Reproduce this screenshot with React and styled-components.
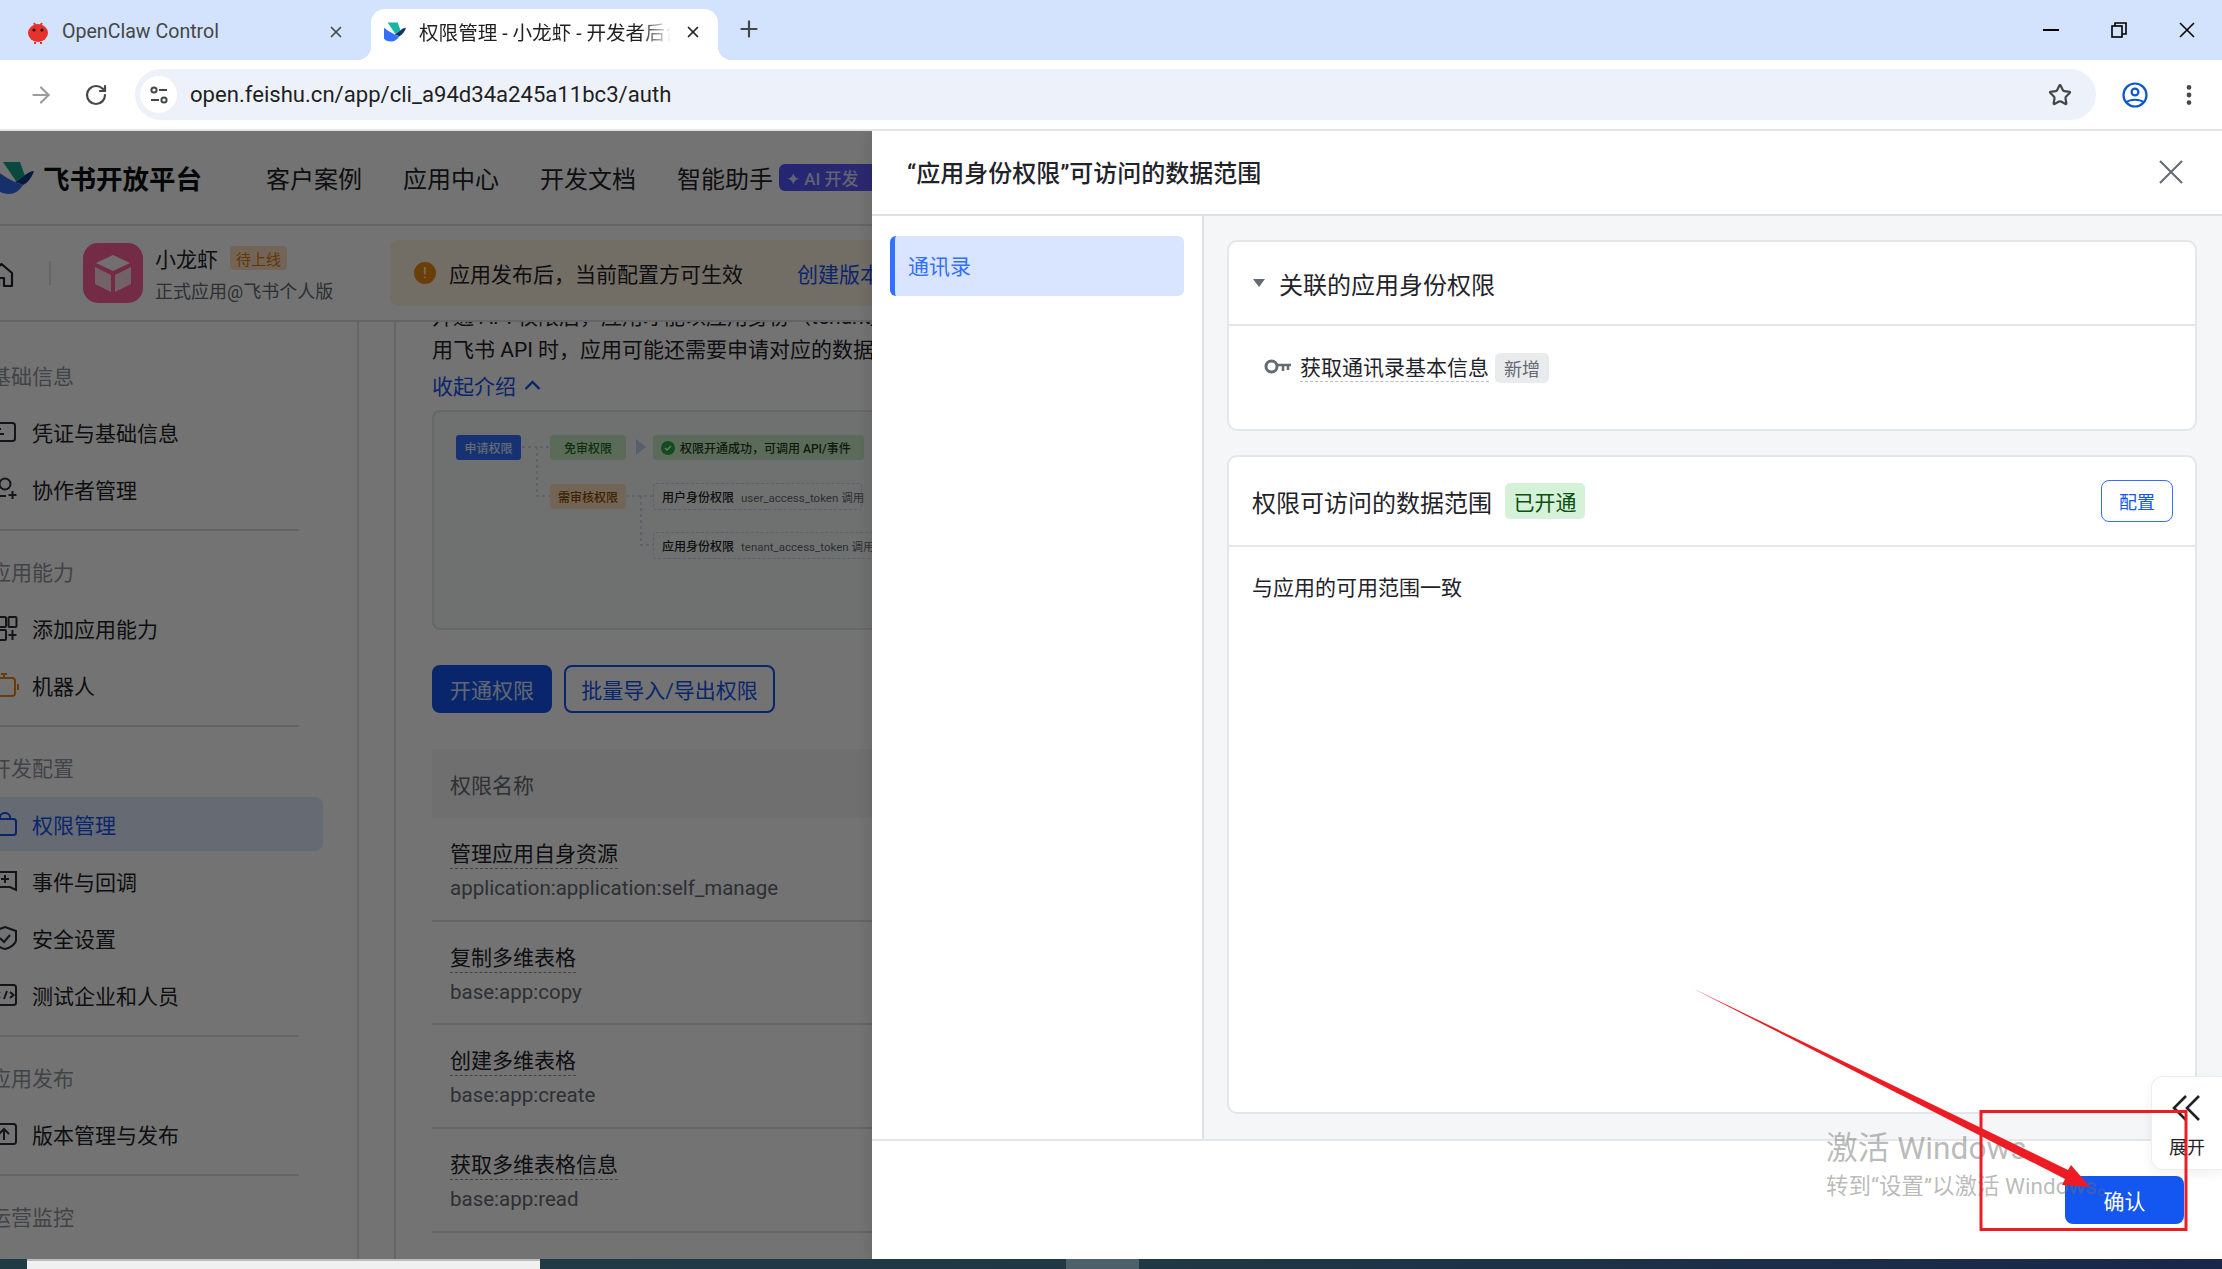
import React from 'react';
import styled, { createGlobalStyle } from 'styled-components';
import { ArrowRight, RotateCw, Plus, X, Star, EllipsisVertical } from 'lucide-react';

const GlobalStyle = createGlobalStyle`
  html, body {
    margin: 0;
    padding: 0;
    background: #fff;
  }
  body {
    font-family: Roboto, "Noto Sans CJK SC", sans-serif;
    color: #1f2329;
  }
  * {
    box-sizing: border-box;
  }
`;

const Page = styled.div`
  position: relative;
  width: 2222px;
  height: 1269px;
  display: flex;
  flex-direction: column;
  overflow: hidden;
`;

/* browser chrome */
const TabStrip = styled.div`
  height: 60px;
  flex: none;
  display: flex;
  align-items: flex-end;
  background: #d3e3fd;
`;

const Tab = styled.div`
  position: relative;
  height: 51px;
  display: flex;
  align-items: center;
  gap: 13px;
  padding-bottom: 6px;
  width: ${(p) => (p.$active ? '347px' : '371px')};
  padding-left: ${(p) => (p.$active ? '13px' : '27px')};
  padding-right: ${(p) => (p.$active ? '16px' : '26px')};
  background: ${(p) => (p.$active ? '#fff' : 'transparent')};
  border-radius: 14px 14px 0 0;

  ${(p) =>
    p.$active &&
    `
    &::before, &::after {
      content: '';
      position: absolute;
      bottom: 0;
      width: 14px;
      height: 14px;
    }
    &::before {
      left: -14px;
      background: radial-gradient(circle at 0 0, transparent 14px, #fff 14.5px);
    }
    &::after {
      right: -14px;
      background: radial-gradient(circle at 100% 0, transparent 14px, #fff 14.5px);
    }
  `}
`;

const TabTitle = styled.span`
  flex: 1;
  min-width: 0;
  overflow: hidden;
  white-space: nowrap;
  font-size: 19.6px;
  color: ${(p) => (p.$active ? '#1f1f1f' : '#444746')};
  ${(p) =>
    p.$active &&
    `
    -webkit-mask-image: linear-gradient(90deg, #000 88%, transparent 100%);
    mask-image: linear-gradient(90deg, #000 88%, transparent 100%);
  `}
`;

const NewTab = styled.div`
  display: flex;
  margin: 0 0 18px 18px;
  color: #444746;
`;

const WindowButtons = styled.div`
  margin-left: auto;
  align-self: flex-start;
  display: flex;
  padding: 18px 1px 0 0;
`;

const WindowButton = styled.div`
  width: 68px;
  height: 24px;
  display: flex;
  align-items: center;
  justify-content: center;
`;

const Toolbar = styled.div`
  height: 71px;
  flex: none;
  display: flex;
  align-items: center;
  background: #fff;
  border-bottom: 2px solid #e3e3e3;
  border-top-right-radius: 8px;
  padding-left: 28px;
  gap: 30px;
`;

const Omnibox = styled.div`
  width: 1961px;
  height: 51px;
  margin-left: -3px;
  display: flex;
  align-items: center;
  padding: 0 24px 0 5px;
  background: #edf2fa;
  border-radius: 26px;
`;

const SiteChip = styled.div`
  width: 37px;
  height: 37px;
  flex: none;
  display: flex;
  align-items: center;
  justify-content: center;
  border-radius: 50%;
  background: #fff;
`;

const Url = styled.span`
  flex: 1;
  margin-left: 13px;
  padding-bottom: 2px;
  font-size: 22.1px;
  color: #1f1f1f;
`;

const ToolIcons = styled.div`
  display: flex;
  align-items: center;
  margin-left: -4px;
  gap: 28px;
`;

/* the page under the drawer */
const Viewport = styled.div`
  position: relative;
  flex: 1;
  min-height: 0;
  overflow: hidden;
`;

const Under = styled.div`
  height: 100%;
  display: flex;
  flex-direction: column;
  background: #fff;
`;

const Nav = styled.div`
  height: 95px;
  flex: none;
  display: flex;
  align-items: center;
  border-bottom: 2px solid #dee0e3;
`;

const Logo = styled.div`
  display: flex;
  align-items: center;
  gap: 9px;
  margin-left: -3px;
  font-size: 26.5px;
  font-weight: 700;
  color: #0b0d10;
`;

const NavLinks = styled.div`
  display: flex;
  margin-left: 64px;
  gap: 41px;
  font-size: 24px;
  white-space: nowrap;
`;

const AiBadge = styled.span`
  display: inline-flex;
  align-items: center;
  gap: 3px;
  margin-left: 6px;
  height: 27px;
  width: 120px;
  padding-left: 7px;
  border-radius: 6px;
  background: linear-gradient(90deg, #4f55ff, #6a5cf5);
  font-size: 17px;
  color: #d8dcff;
  font-weight: 500;
  align-self: center;
`;

const AppBar = styled.div`
  height: 96px;
  flex: none;
  display: flex;
  align-items: center;
  border-bottom: 2px solid #dee0e3;
`;

const HomeIcon = styled.div`
  display: flex;
  margin-left: -11px;
  margin-top: 4px;
`;

const VRule = styled.div`
  width: 2px;
  height: 24px;
  margin: 0 32px 0 35px;
  background: #dee0e3;
`;

const AppIcon = styled.div`
  width: 60px;
  height: 60px;
  flex: none;
  display: flex;
  align-items: center;
  justify-content: center;
  border-radius: 15px;
  background: #ff5f9b;
`;

const AppMeta = styled.div`
  width: 235px;
  margin-left: 12px;
  display: flex;
  flex-direction: column;
  gap: 4px;
`;

const AppName = styled.div`
  display: flex;
  align-items: center;
  gap: 12px;
  font-size: 21px;
`;

const PendingTag = styled.span`
  display: inline-flex;
  align-items: center;
  justify-content: center;
  height: 24px;
  width: 57px;
  border-radius: 4px;
  background: #fcdfc4;
  color: #de7802;
  font-size: 15px;
`;

const AppSub = styled.div`
  font-size: 18px;
  color: #646a73;
  white-space: nowrap;
`;

const Banner = styled.div`
  width: 560px;
  height: 66px;
  flex: none;
  display: flex;
  align-items: center;
  gap: 13px;
  padding-left: 24px;
  border-radius: 8px;
  background: #fdf1e0;
  font-size: 21px;
  white-space: nowrap;
`;

const BannerIcon = styled.span`
  width: 22px;
  height: 22px;
  flex: none;
  display: flex;
  align-items: center;
  justify-content: center;
  border-radius: 50%;
  background: #ed8b12;
  color: #fff;
  font-size: 15px;
`;

const BannerLink = styled.span`
  margin-left: 41px;
  color: #1456f0;
`;

const Body = styled.div`
  flex: 1;
  min-height: 0;
  display: flex;
`;

const Sidebar = styled.div`
  width: 359px;
  flex: none;
  display: flex;
  flex-direction: column;
  gap: 3px;
  padding: 26px 36px 0 0;
  border-right: 2px solid #dee0e3;
  overflow: hidden;
`;

const SideLabel = styled.div`
  height: 54px;
  flex: none;
  display: flex;
  align-items: center;
  margin-left: -10px;
  font-size: 21px;
  color: #8f959e;
  white-space: nowrap;
`;

const SideItem = styled.div`
  height: 54px;
  flex: none;
  display: flex;
  align-items: center;
  gap: 16px;
  width: 323px;
  border-radius: 0 8px 8px 0;
  font-size: 21px;
  white-space: nowrap;
  background: ${(p) => (p.$active ? '#e1eaff' : 'transparent')};
  color: ${(p) => (p.$active ? '#1456f0' : '#1f2329')};

  svg {
    flex: none;
    margin-left: -8px;
    overflow: visible;
  }
`;

const SideRule = styled.div`
  height: 2px;
  flex: none;
  width: 299px;
  margin: 10px 0;
  background: #dee0e3;
`;

const Gutter = styled.div`
  width: 37px;
  flex: none;
  border-right: 2px solid #dee0e3;
`;

const Main = styled.div`
  flex: 1;
  min-width: 0;
  padding-left: 36px;
  overflow: hidden;
`;

const Intro = styled.p`
  margin: -21px 0 0;
  font-size: 21px;
  line-height: 33px;
  color: #1f2329;
  white-space: nowrap;
`;

const Collapse = styled.div`
  height: 37px;
  display: flex;
  align-items: center;
  gap: 8px;
  margin-top: -1px;
  font-size: 21px;
  color: #1456f0;
`;

const Diagram = styled.div`
  position: relative;
  width: 800px;
  height: 220px;
  margin-top: 7px;
  border: 2px solid #e0e4e6;
  border-radius: 8px;
  background: #f6fbfb;
`;

const DiagramLines = styled.svg`
  position: absolute;
  left: 0;
  top: 0;
`;

const Node = styled.div`
  position: absolute;
  left: ${(p) => p.$x}px;
  top: ${(p) => p.$y}px;
  width: ${(p) => p.$w}px;
  height: ${(p) => p.$h || 25}px;
  display: flex;
  align-items: center;
  justify-content: ${(p) => (p.$start ? 'flex-start' : 'center')};
  gap: 5px;
  padding-left: ${(p) => (p.$start ? '8px' : '0')};
  border-radius: 3px;
  font-size: 12px;
  font-weight: 500;
  white-space: nowrap;
  color: ${(p) => p.$color};
  background: ${(p) => p.$bg || 'transparent'};
  border: ${(p) => (p.$dashed ? '1.5px dashed #c7d5f2' : 'none')};
`;

const NodeMuted = styled.span`
  margin-left: 2px;
  font-weight: 400;
  font-size: 11.5px;
  color: #646a73;
`;

const Actions = styled.div`
  display: flex;
  gap: 12px;
  margin-top: 35px;
`;

const Button = styled.div`
  height: 48px;
  display: flex;
  align-items: center;
  justify-content: center;
  width: ${(p) => p.$w}px;
  border-radius: 8px;
  font-size: 21px;
  white-space: nowrap;
  background: ${(p) => (p.$solid ? '#1456f0' : '#fff')};
  color: ${(p) => (p.$solid ? '#d8e2ff' : '#1456f0')};
  border: ${(p) => (p.$solid ? 'none' : '2px solid #1456f0')};
`;

const TableHead = styled.div`
  height: 69px;
  margin-top: 36px;
  display: flex;
  align-items: center;
  padding-left: 18px;
  background: #f5f6f7;
  font-size: 21px;
  color: #646a73;
`;

const Row = styled.div`
  height: 103.7px;
  padding: 23px 0 0 18px;
  border-bottom: 2px solid #dee0e3;
`;

const RowName = styled.div`
  display: inline-block;
  font-size: 21px;
  line-height: 27px;
  padding-bottom: 0;
  border-bottom: 1.5px dashed #8f959e;
`;

const RowCode = styled.div`
  margin-top: 5px;
  font-size: 20.5px;
  line-height: 28px;
  color: #646a73;
`;

const Dim = styled.div`
  position: absolute;
  inset: 0;
  background: rgba(0, 0, 0, 0.55);
`;

/* drawer */
const Drawer = styled.div`
  position: absolute;
  top: 0;
  bottom: 0;
  left: 872px;
  right: 0;
  display: flex;
  flex-direction: column;
  background: #fff;
  box-shadow: -4px 0 12px rgba(0, 0, 0, 0.08);
`;

const DrawerHead = styled.div`
  height: 85px;
  flex: none;
  display: flex;
  align-items: center;
  justify-content: space-between;
  padding: 0 39px 2px 35px;
  border-bottom: 2px solid #dee0e3;
  font-size: 24px;
  font-weight: 500;
`;

const DrawerBody = styled.div`
  flex: 1;
  min-height: 0;
  display: flex;
`;

const DrawerSide = styled.div`
  width: 332px;
  flex: none;
  padding: 20px 18px 0 18px;
  border-right: 2px solid #dee0e3;
`;

const DrawerTab = styled.div`
  height: 60px;
  display: flex;
  align-items: center;
  padding: 0 0 2px 13px;
  border-left: 5px solid #3370ff;
  border-radius: 6px;
  background: #d9e5fe;
  color: #3370ff;
  font-size: 21px;
`;

const DrawerContent = styled.div`
  flex: 1;
  min-width: 0;
  display: flex;
  flex-direction: column;
  gap: 24px;
  padding: 24px 25px 25px 23px;
  background: #f5f6f7;
`;

const Card = styled.div`
  display: flex;
  flex-direction: column;
  ${(p) => (p.$grow ? 'flex: 1; min-height: 0;' : 'height: 191px; flex: none;')}
  border: 2px solid #e4e6e9;
  border-radius: 10px;
  background: #fff;
`;

const CardHead = styled.div`
  flex: none;
  display: flex;
  align-items: center;
  height: ${(p) => p.$h}px;
  padding: 0 22px 0 ${(p) => p.$pad}px;
  border-bottom: 2px solid #e4e6e9;
  font-size: 24px;
  white-space: nowrap;
`;

const Caret = styled.span`
  width: 0;
  height: 0;
  margin-right: 14px;
  border-left: 6px solid transparent;
  border-right: 6px solid transparent;
  border-top: 8px solid #646a73;
`;

const KeyRow = styled.div`
  display: flex;
  align-items: center;
  padding: 27px 0 0 35px;
`;

const KeyName = styled.span`
  margin-left: 8px;
  font-size: 21px;
  line-height: 26px;
  border-bottom: 1.5px dashed #bbbfc4;
`;

const GrayTag = styled.span`
  display: inline-flex;
  align-items: center;
  justify-content: center;
  width: 54px;
  height: 30px;
  margin-left: 6px;
  border-radius: 5px;
  background: #e9ebec;
  color: #646a73;
  font-size: 18px;
`;

const GreenTag = styled.span`
  display: inline-flex;
  align-items: center;
  justify-content: center;
  width: 80px;
  height: 36px;
  margin-left: 13px;
  border-radius: 5px;
  background: #d5f2d8;
  color: #0c4f12;
  font-size: 21px;
`;

const OutlineButton = styled.div`
  width: 72px;
  height: 42px;
  margin-left: auto;
  display: flex;
  align-items: center;
  justify-content: center;
  border: 1.5px solid #3370ff;
  border-radius: 8px;
  color: #1456f0;
  font-size: 18px;
`;

const CardText = styled.div`
  padding: 26px 0 0 23px;
  font-size: 21px;
  line-height: 30px;
`;

const DrawerFoot = styled.div`
  height: 120px;
  flex: none;
  display: flex;
  align-items: center;
  justify-content: flex-end;
  padding-right: 38px;
  border-top: 2px solid #e4e6e9;
`;

const ConfirmButton = styled.div`
  width: 119px;
  height: 48px;
  display: flex;
  align-items: center;
  justify-content: center;
  border-radius: 8px;
  background: #1456f0;
  color: #fff;
  font-size: 21px;
`;

const Expander = styled.div`
  position: absolute;
  top: 945px;
  right: 0;
  width: 71px;
  height: 94px;
  display: flex;
  flex-direction: column;
  align-items: center;
  gap: 12px;
  padding-top: 18px;
  background: #fff;
  border: 1px solid #eceef0;
  border-right: none;
  border-radius: 12px 0 0 12px;
  box-shadow: 0 4px 12px rgba(0, 0, 0, 0.06);
  font-size: 18px;
`;

const Watermark = styled.div`
  position: absolute;
  left: 1826px;
  top: 1128px;
  display: flex;
  flex-direction: column;
  gap: 1px;
  color: rgba(110, 110, 110, 0.48);
  white-space: nowrap;
  pointer-events: none;
`;

const WatermarkTitle = styled.div`
  font-size: 31.7px;
  line-height: 42px;
`;

const WatermarkSub = styled.div`
  font-size: 22.5px;
  line-height: 30px;
`;

const Annotation = styled.svg`
  position: absolute;
  left: 0;
  top: 0;
  pointer-events: none;
`;

/* taskbar at the very bottom */
const Taskbar = styled.div`
  height: 10px;
  flex: none;
  display: flex;
  background: linear-gradient(90deg, #203b44 0%, #213844 50%, #18274a 100%);
`;

const TaskWindow = styled.div`
  width: 513px;
  margin-left: 27px;
  background: #f0f0f0;
  border-top: 2px solid #bcbcbc;
`;

const TaskButton = styled.div`
  width: 73px;
  margin-left: 526px;
  background: #4e616b;
`;

const sideSections = [
  { label: '基础信息', items: [['card', '凭证与基础信息'], ['user', '协作者管理']] },
  { label: '应用能力', items: [['apps', '添加应用能力'], ['bot', '机器人']] },
  {
    label: '开发配置',
    items: [
      ['lock', '权限管理', true],
      ['event', '事件与回调'],
      ['shield', '安全设置'],
      ['code', '测试企业和人员'],
    ],
  },
  { label: '应用发布', items: [['upload', '版本管理与发布']] },
  { label: '运营监控', items: [] },
];

const rows = [
  ['管理应用自身资源', 'application:application:self_manage'],
  ['复制多维表格', 'base:app:copy'],
  ['创建多维表格', 'base:app:create'],
  ['获取多维表格信息', 'base:app:read'],
];

const SideIcon = ({ name, active }) => {
  const color = name === 'bot' ? '#e8861b' : active ? '#1456f0' : '#2b2f36';
  const shapes = {
    card: (
      <>
        <rect x="-3" y="3" width="26" height="18" rx="2.5" />
        <path d="M-3 9h12M-3 14h15" />
      </>
    ),
    user: (
      <>
        <circle cx="13" cy="7" r="5.5" />
        <path d="M-3 19h17M20.5 14v8M16.5 18h8" />
      </>
    ),
    apps: (
      <>
        <rect x="5" y="1" width="9" height="10" rx="1" />
        <rect x="16.5" y="1" width="8" height="10" rx="1" />
        <rect x="5" y="14" width="9" height="10" rx="1" />
        <path d="M20.5 14v10M16.5 19h8" />
      </>
    ),
    bot: (
      <>
        <rect x="-3" y="5" width="26" height="18" rx="3" />
        <path d="M12 1v4M9 1h6M26 11v6" />
        <path d="M11 14h.1M16 14h.1" strokeWidth="3" />
      </>
    ),
    lock: (
      <>
        <rect x="-3" y="7" width="27" height="16" rx="2.5" />
        <path d="M8 7V5a5 4 0 0 1 10 0v2" />
        <path d="M13 15h.1" strokeWidth="4" />
      </>
    ),
    event: (
      <>
        <path d="M-3 3h27v18l-6-3H3l-6 3z" />
        <path d="M13 6v8M9 10h8" />
      </>
    ),
    shield: (
      <>
        <path d="M13 1l11 4v9c0 4-6 8-11 9-5-1-11-5-11-9V5z" />
        <path d="M8 12l4 4 6-7" />
      </>
    ),
    code: (
      <>
        <rect x="-3" y="2" width="27" height="20" rx="2.5" />
        <path d="M8 9l-3.5 3 3.5 3M18 9l3.5 3-3.5 3M15 8l-3 8" />
      </>
    ),
    upload: (
      <>
        <rect x="-3" y="2" width="27" height="20" rx="2.5" />
        <path d="M12 18V7M7 12l5-5 5 5" />
      </>
    ),
  };
  return (
    <svg width="24" height="24" viewBox="0 0 24 24" fill="none" stroke={color} strokeWidth="2">
      {shapes[name]}
    </svg>
  );
};

const Side = () => (
  <Sidebar>
    {sideSections.map((section, i) => (
      <React.Fragment key={section.label}>
        <SideLabel>{section.label}</SideLabel>
        {section.items.map(([icon, text, active]) => (
          <SideItem key={text} $active={active}>
            <SideIcon name={icon} active={active} />
            {text}
          </SideItem>
        ))}
        {i < sideSections.length - 1 && <SideRule />}
      </React.Fragment>
    ))}
  </Sidebar>
);

const FlowDiagram = () => (
  <Diagram>
    <DiagramLines width="700" height="216" fill="none" stroke="#c3d0ea" strokeWidth="1.5" strokeDasharray="3 3">
      <path d="M88 35H116M103 35V84H116M192 84H219M207 84V133H219" />
    </DiagramLines>
    <DiagramLines width="700" height="216">
      <path d="M202 27l10 8-10 8z" fill="#c3d0f5" />
    </DiagramLines>
    <Node $x={22} $y={23} $w={65} $bg="#3370ff" $color="#dfe8ff">
      申请权限
    </Node>
    <Node $x={116} $y={23} $w={76} $bg="#c9ecc6" $color="#1f6b1a">
      免审权限
    </Node>
    <Node $x={219} $y={23} $w={211} $bg="#c9ecc6" $color="#1f3b1d" $start>
      <svg width="14" height="14" viewBox="0 0 14 14">
        <circle cx="7" cy="7" r="7" fill="#28a745" />
        <path d="M4 7l2 2 4-4" fill="none" stroke="#fff" strokeWidth="1.5" />
      </svg>
      权限开通成功，可调用 API/事件
    </Node>
    <Node $x={116} $y={72} $w={76} $bg="#fde0bd" $color="#8a4a05">
      需审核权限
    </Node>
    <Node $x={219} $y={71} $w={209} $h={27} $dashed $color="#1f2329" $start>
      用户身份权限
      <NodeMuted>user_access_token 调用</NodeMuted>
    </Node>
    <Node $x={219} $y={120} $w={240} $h={27} $dashed $color="#1f2329" $start>
      应用身份权限
      <NodeMuted>tenant_access_token 调用</NodeMuted>
    </Node>
  </Diagram>
);

const UnderPage = () => (
  <Under>
    <Nav>
      <Logo>
        <svg width="37" height="32" viewBox="0 0 37 32">
          <path d="M6 0h17l5 14-9 5z" fill="#12a18a" />
          <path d="M37 9c-3 0-7 2-10 5l-9 6 8 3c5-2 9-8 11-14z" fill="#0e3a8f" />
          <path d="M0 9c5 4 11 8 18 11 2 1 5 2 8 3-3 5-8 9-14 9C6 32 2 30 0 27z" fill="#2f6bf0" />
        </svg>
        飞书开放平台
      </Logo>
      <NavLinks>
        <span>客户案例</span>
        <span>应用中心</span>
        <span>开发文档</span>
        <span>智能助手</span>
      </NavLinks>
      <AiBadge>✦ AI 开发</AiBadge>
    </Nav>
    <AppBar>
      <HomeIcon>
        <svg width="25" height="26" viewBox="0 0 25 26" fill="none" stroke="#1f2329" strokeWidth="2.2">
          <path d="M2 11L12.5 2 23 11V24H15V16H10V24H2z" strokeLinejoin="round" />
        </svg>
      </HomeIcon>
      <VRule />
      <AppIcon>
        <svg width="40" height="40" viewBox="0 0 40 40">
          <path d="M20 2l17 8-17 8-17-8z" fill="#fff" fillOpacity="0.95" />
          <path d="M2 14l16 8v17L2 31z" fill="#fff" fillOpacity="0.75" />
          <path d="M38 14l-16 8v17l16-8z" fill="#fff" fillOpacity="0.75" />
        </svg>
      </AppIcon>
      <AppMeta>
        <AppName>
          小龙虾
          <PendingTag>待上线</PendingTag>
        </AppName>
        <AppSub>正式应用@飞书个人版</AppSub>
      </AppMeta>
      <Banner>
        <BannerIcon>!</BannerIcon>
        应用发布后，当前配置方可生效
        <BannerLink>创建版本</BannerLink>
      </Banner>
    </AppBar>
    <Body>
      <Side />
      <Gutter />
      <Main>
        <Intro>
          开通 API 权限后，应用才能以应用身份（tenant_access_token）调用
          <br />
          用飞书 API 时，应用可能还需要申请对应的数据权限
        </Intro>
        <Collapse>
          收起介绍
          <svg width="17" height="10" viewBox="0 0 17 10" fill="none" stroke="#1456f0" strokeWidth="2.4">
            <path d="M1.5 9l7-7 7 7" />
          </svg>
        </Collapse>
        <FlowDiagram />
        <Actions>
          <Button $solid $w={120}>
            开通权限
          </Button>
          <Button $w={211}>批量导入/导出权限</Button>
        </Actions>
        <TableHead>权限名称</TableHead>
        {rows.map(([name, code]) => (
          <Row key={code}>
            <RowName>{name}</RowName>
            <RowCode>{code}</RowCode>
          </Row>
        ))}
      </Main>
    </Body>
  </Under>
);

const ScopeDrawer = () => (
  <Drawer>
    <DrawerHead>
      “应用身份权限”可访问的数据范围
      <svg width="24" height="24" viewBox="0 0 24 24" stroke="#646a73" strokeWidth="2">
        <path d="M1 1l22 22M23 1L1 23" />
      </svg>
    </DrawerHead>
    <DrawerBody>
      <DrawerSide>
        <DrawerTab>通讯录</DrawerTab>
      </DrawerSide>
      <DrawerContent>
        <Card>
          <CardHead $h={84} $pad={24}>
            <Caret />
            关联的应用身份权限
          </CardHead>
          <KeyRow>
            <svg width="28" height="18" viewBox="0 0 28 18" fill="none" stroke="#646a73" strokeWidth="3">
              <circle cx="7.5" cy="7.5" r="5.5" />
              <path d="M13 6h14M19 6v6M24 6v5" strokeWidth="2.5" />
            </svg>
            <KeyName>获取通讯录基本信息</KeyName>
            <GrayTag>新增</GrayTag>
          </KeyRow>
        </Card>
        <Card $grow>
          <CardHead $h={90} $pad={23}>
            权限可访问的数据范围
            <GreenTag>已开通</GreenTag>
            <OutlineButton>配置</OutlineButton>
          </CardHead>
          <CardText>与应用的可用范围一致</CardText>
        </Card>
      </DrawerContent>
    </DrawerBody>
    <DrawerFoot>
      <ConfirmButton>确认</ConfirmButton>
    </DrawerFoot>
  </Drawer>
);

const App = () => (
  <Page>
    <GlobalStyle />
    <TabStrip>
      <Tab>
        <svg width="22" height="24" viewBox="0 0 22 24">
          <ellipse cx="11" cy="13" rx="10" ry="9" fill="#e5322d" />
          <circle cx="7" cy="10" r="1.6" fill="#3a0a0a" />
          <circle cx="15" cy="10" r="1.6" fill="#3a0a0a" />
          <path d="M7 3l2 3M15 3l-2 3M8 22v2M14 22v2" stroke="#e5322d" strokeWidth="2" />
        </svg>
        <TabTitle>OpenClaw Control</TabTitle>
        <X size={18} color="#444746" strokeWidth={2.2} />
      </Tab>
      <Tab $active>
        <svg width="22" height="24" viewBox="0 0 37 32">
          <path d="M6 0h17l5 14-9 5z" fill="#14b8a0" />
          <path d="M37 9c-3 0-7 2-10 5l-9 6 8 3c5-2 9-8 11-14z" fill="#14306e" />
          <path d="M0 9c5 4 11 8 18 11 2 1 5 2 8 3-3 5-8 9-14 9C6 32 2 30 0 27z" fill="#3370ff" />
        </svg>
        <TabTitle $active>权限管理 - 小龙虾 - 开发者后台</TabTitle>
        <X size={18} color="#1f1f1f" strokeWidth={2.2} />
      </Tab>
      <NewTab>
        <Plus size={26} strokeWidth={2} />
      </NewTab>
      <WindowButtons>
        <WindowButton>
          <svg width="16" height="2" viewBox="0 0 16 2">
            <path d="M0 1h16" stroke="#000" strokeWidth="2" />
          </svg>
        </WindowButton>
        <WindowButton>
          <svg width="16" height="16" viewBox="0 0 16 16" fill="none" stroke="#000" strokeWidth="1.6">
            <rect x="1" y="4" width="10" height="11" />
            <path d="M4 4V1h11v11h-4" />
          </svg>
        </WindowButton>
        <WindowButton>
          <svg width="16" height="16" viewBox="0 0 16 16" stroke="#000" strokeWidth="1.6">
            <path d="M1 1l14 14M15 1L1 15" />
          </svg>
        </WindowButton>
      </WindowButtons>
    </TabStrip>
    <Toolbar>
      <ArrowRight size={26} color="#9a9c9e" strokeWidth={2} />
      <RotateCw size={24} color="#444746" strokeWidth={2.2} />
      <Omnibox>
        <SiteChip>
          <svg width="20" height="20" viewBox="0 0 20 20" fill="none" stroke="#444746" strokeWidth="2">
            <circle cx="5" cy="5" r="2.6" />
            <circle cx="15" cy="15" r="2.6" />
            <path d="M10 5h8M2 15h8" />
          </svg>
        </SiteChip>
        <Url>open.feishu.cn/app/cli_a94d34a245a11bc3/auth</Url>
        <Star size={24} color="#444746" strokeWidth={2.2} />
      </Omnibox>
      <ToolIcons>
        <svg width="26" height="26" viewBox="0 0 26 26" fill="none" stroke="#0b57d0" strokeWidth="2.2">
          <circle cx="13" cy="13" r="11.5" />
          <circle cx="13" cy="10" r="3.4" />
          <path d="M5 20c3-3 13-3 16 0" />
        </svg>
        <EllipsisVertical size={26} color="#444746" strokeWidth={2.4} />
      </ToolIcons>
    </Toolbar>
    <Viewport>
      <UnderPage />
      <Dim />
      <ScopeDrawer />
      <Expander>
        <svg width="30" height="26" viewBox="0 0 30 26" fill="none" stroke="#1f2329" strokeWidth="2.6">
          <path d="M14 1L2 13l12 12M27 1L15 13l12 12" />
        </svg>
        展开
      </Expander>
    </Viewport>
    <Taskbar>
      <TaskWindow />
      <TaskButton />
    </Taskbar>
    <Watermark>
      <WatermarkTitle>激活 Windows</WatermarkTitle>
      <WatermarkSub>转到“设置”以激活 Windows。</WatermarkSub>
    </Watermark>
    <Annotation width="2222" height="1269" viewBox="0 0 2222 1269">
      <rect x="1981" y="1111.5" width="205" height="118" fill="none" stroke="#ed1c24" strokeWidth="3" />
      <polygon points="1692,988 2068,1170 2071,1165 2090,1187 2062,1185 2065,1179" fill="#ed1c24" />
    </Annotation>
  </Page>
);

export default App;
